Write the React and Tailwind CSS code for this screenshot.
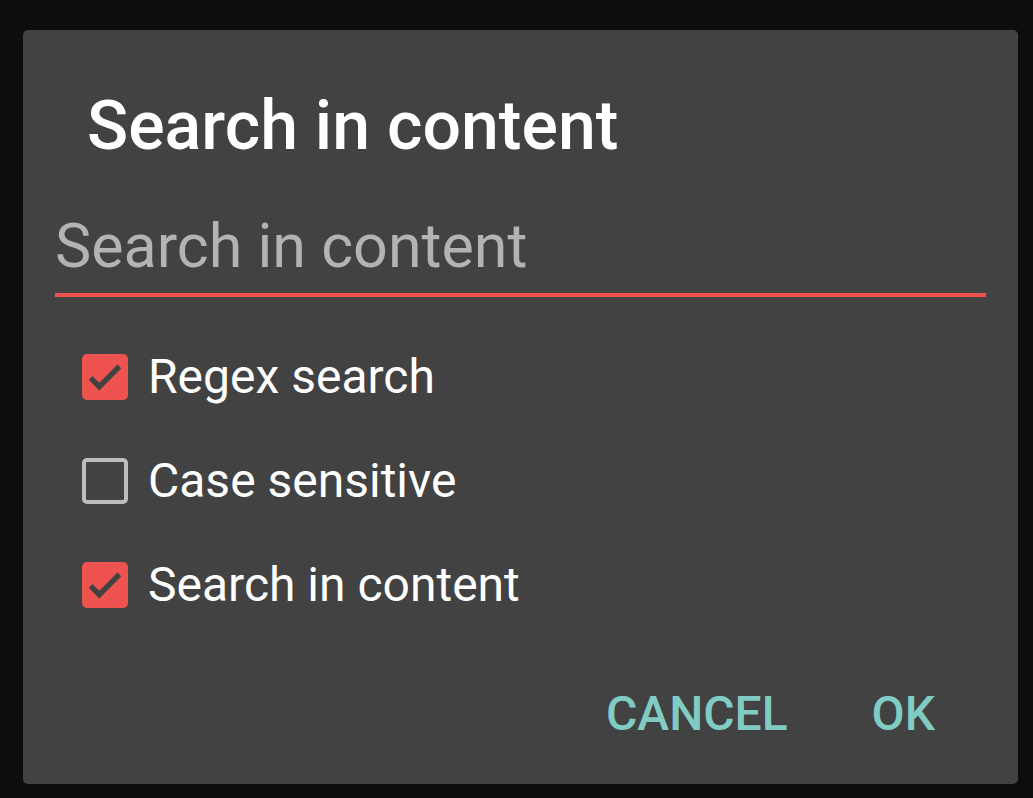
import { useState } from "react";

function Box({ checked, onClick }) {
  if (checked) {
    return (
      <button onClick={onClick} className="w-[46px] h-[46px] rounded-[5px] bg-[#ef5350] flex items-center justify-center shrink-0">
        <svg viewBox="0 0 24 24" className="w-[46px] h-[46px]" fill="none" stroke="#424242" strokeWidth="2.8">
          <path d="M4.5 12.5l4.5 4.5L19.5 6.5" />
        </svg>
      </button>
    );
  }
  return (
    <button onClick={onClick} className="w-[46px] h-[46px] rounded-[5px] border-[4px] border-[#bdbdbd] shrink-0" />
  );
}

export default function App() {
  const [opts, setOpts] = useState({ regex: true, cs: false, content: true });
  const rows = [
    ["regex", "Regex search"],
    ["cs", "Case sensitive"],
    ["content", "Search in content"],
  ];

  return (
    <div className="w-[1033px] h-[798px] bg-[#0d0d0d] pt-[30px] pl-[23px] font-['Roboto',sans-serif]">
      <div className="w-[995px] h-[754px] bg-[#424242] rounded-[5px] flex flex-col">
        <h1 className="text-white font-medium text-[68px] leading-none pl-[64px] pt-[62px]">Search in content</h1>
        <div className="mx-[32px] mt-[50px] border-b-[4px] border-[#ef5350]">
          <input
            placeholder="Search in content"
            className="w-full bg-transparent outline-none text-[61px] leading-none text-white placeholder:text-[#b3b3b3] pb-[11px]"
          />
        </div>
        <div className="flex flex-col gap-[56px] mt-[56px] pl-[59px]">
          {rows.map(([k, label]) => (
            <div key={k} className="flex items-center gap-[20px]">
              <Box checked={opts[k]} onClick={() => setOpts({ ...opts, [k]: !opts[k] })} />
              <span className="text-white text-[48px] leading-none">{label}</span>
            </div>
          ))}
        </div>
        <div className="flex justify-end gap-[84px] mt-auto pb-[46px] pr-[83px]">
          <button className="text-[#80cbc4] font-medium text-[48px] leading-none">CANCEL</button>
          <button className="text-[#80cbc4] font-medium text-[48px] leading-none">OK</button>
        </div>
      </div>
    </div>
  );
}
